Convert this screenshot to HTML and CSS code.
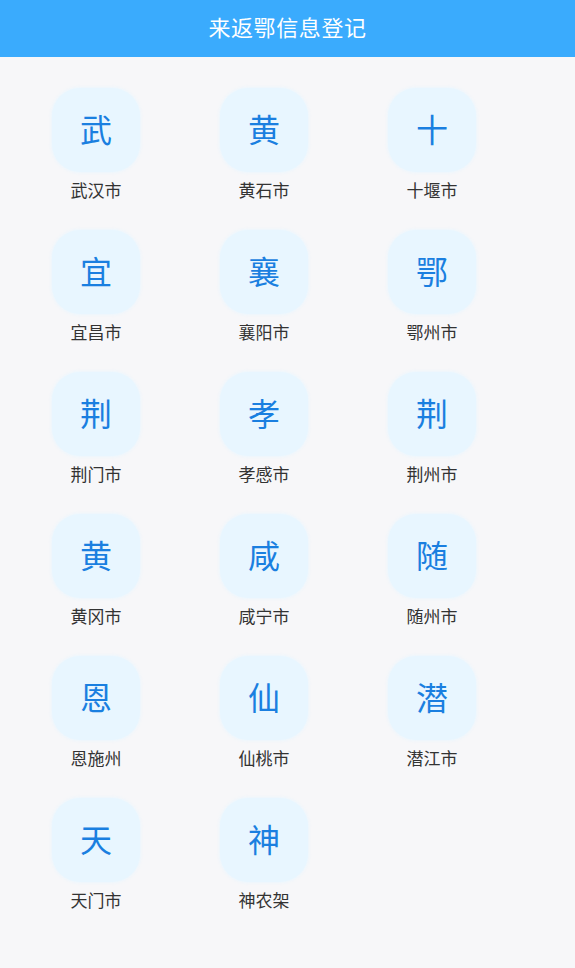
FILE: index.html
```html
<!DOCTYPE html>
<html lang="zh">
<head>
<meta charset="utf-8">
<link rel="stylesheet" href="styles.css">
</head>
<body>
<header class="bar">来返鄂信息登记</header>
<main class="grid">
  <div class="item"><div class="tile">武</div><div class="name">武汉市</div></div>
  <div class="item"><div class="tile">黄</div><div class="name">黄石市</div></div>
  <div class="item"><div class="tile">十</div><div class="name">十堰市</div></div>
  <div class="item"><div class="tile">宜</div><div class="name">宜昌市</div></div>
  <div class="item"><div class="tile">襄</div><div class="name">襄阳市</div></div>
  <div class="item"><div class="tile">鄂</div><div class="name">鄂州市</div></div>
  <div class="item"><div class="tile">荆</div><div class="name">荆门市</div></div>
  <div class="item"><div class="tile">孝</div><div class="name">孝感市</div></div>
  <div class="item"><div class="tile">荆</div><div class="name">荆州市</div></div>
  <div class="item"><div class="tile">黄</div><div class="name">黄冈市</div></div>
  <div class="item"><div class="tile">咸</div><div class="name">咸宁市</div></div>
  <div class="item"><div class="tile">随</div><div class="name">随州市</div></div>
  <div class="item"><div class="tile">恩</div><div class="name">恩施州</div></div>
  <div class="item"><div class="tile">仙</div><div class="name">仙桃市</div></div>
  <div class="item"><div class="tile">潜</div><div class="name">潜江市</div></div>
  <div class="item"><div class="tile">天</div><div class="name">天门市</div></div>
  <div class="item"><div class="tile">神</div><div class="name">神农架</div></div>
</main>
</body>
</html>
```
FILE: styles.css
```css
html, body {
  margin: 0;
  padding: 0;
  background: #f7f7f9;
  font-family: "Noto Sans CJK SC", "Noto Sans", sans-serif;
}
.bar {
  height: 57px;
  box-sizing: border-box;
  padding-bottom: 6px;
  background: #3aabfd;
  color: #ffffff;
  font-size: 22px;
  display: flex;
  align-items: center;
  justify-content: center;
  letter-spacing: 0.6px;
}
.grid {
  display: grid;
  grid-template-columns: repeat(3, 168px);
  padding: 31px 0 0 12px;
  row-gap: 11px;
}
.item {
  display: flex;
  flex-direction: column;
  align-items: center;
}
.tile {
  width: 88px;
  height: 84px;
  box-sizing: border-box;
  padding-bottom: 5px;
  border-radius: 28px;
  background: #e8f6ff;
  box-shadow: 0 0 3px 1px rgba(232, 246, 255, 0.8);
  color: #1a7fe0;
  font-size: 32px;
  display: flex;
  align-items: center;
  justify-content: center;
}
.name {
  margin-top: 7px;
  font-size: 17px;
  line-height: 22px;
  height: 40px;
  color: #333333;
}
```
